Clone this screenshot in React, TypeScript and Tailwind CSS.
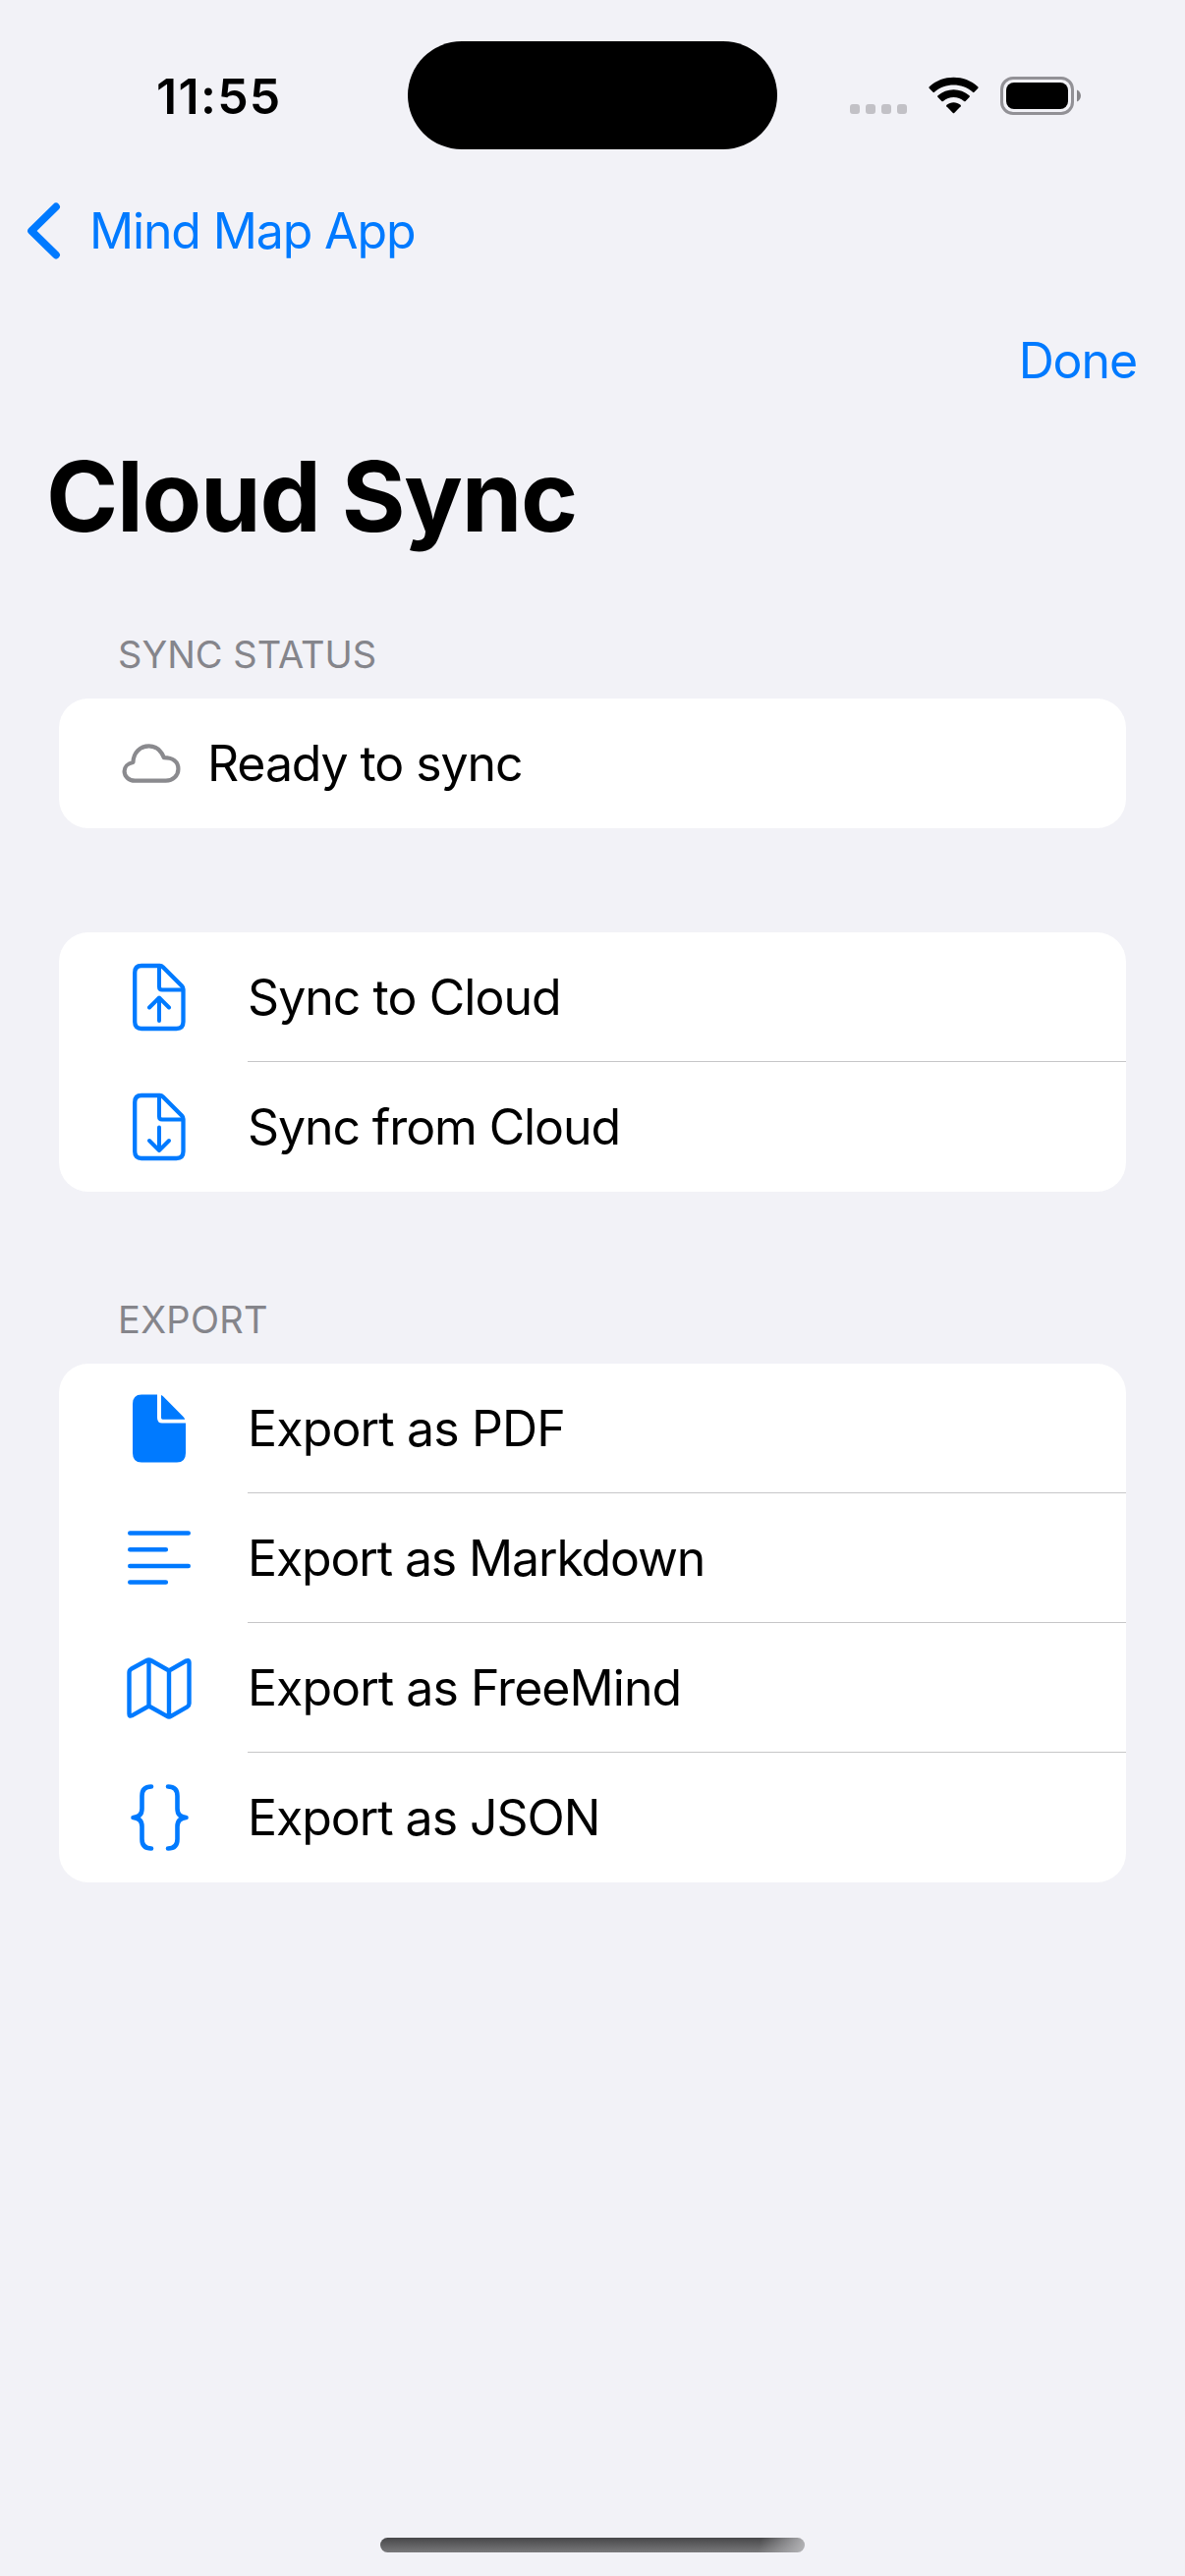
import type { ReactNode } from 'react';

const stroke = {
  fill: 'none',
  stroke: 'currentColor',
  strokeLinecap: 'round' as const,
  strokeLinejoin: 'round' as const,
};

function DocOutline({ children }: { children: ReactNode }) {
  return (
    <svg width="54" height="70" viewBox="0 0 54 70" {...stroke} strokeWidth="4.300">
      <path d="M9 3H27.500Q29.500 3 31 4.500L50 23.500Q51.500 25 51.500 27V60Q51.500 67 44.500 67H9Q2.200 67 2.200 60V10Q2.200 3 9 3Z" />
      <path d="M27 4V24.500Q27 27.500 30 27.500H50" strokeWidth="4" />
      {children}
    </svg>
  );
}

function DocUp() {
  return (
    <DocOutline>
      <path d="M27 59V35.500M17 45.500L27 35.500L37 45.500" strokeWidth="4" />
    </DocOutline>
  );
}

function DocDown() {
  return (
    <DocOutline>
      <path d="M27 35.500V59M17 49L27 59L37 49" strokeWidth="4" />
    </DocOutline>
  );
}

function DocFill() {
  return (
    <svg width="54" height="70" viewBox="0 0 54 70" fill="currentColor">
      <path d="M9 0.500H25V24Q25 29.500 30 29.500H54V60Q54 69.500 45 69.500H9Q0 69.500 0 60V10Q0 0.500 9 0.500Z" />
      <path d="M29 1Q30 1.300 31 2.300L51.500 23Q53 24.500 53.200 25.800H30.500Q29 25.800 29 24Z" />
    </svg>
  );
}

function Lines() {
  return (
    <svg className="mb-px" width="64" height="55" viewBox="0 0 64 55" {...stroke} strokeWidth="4.600">
      <path d="M2.300 2.500H61.700M2.300 19.300H38.800M2.300 36H61.700M2.300 52.500H38.800" />
    </svg>
  );
}

function MapIcon() {
  return (
    <svg width="66" height="63" viewBox="0 0 66 63" {...stroke} strokeWidth="4.400">
      <path d="M2.500 15.500Q2.500 13 4.500 11.800L20.500 3Q22.500 1.800 24.500 3L43 13.500L60.500 3.500Q63.500 2.200 63.500 5V47Q63.500 49 61.500 50.300L45 59.800Q43 61 41 59.800L22.500 49.500L5 59.300Q2.500 60.300 2.500 57.500ZM22.500 3V49.500M43 13.500V60" />
    </svg>
  );
}

function Braces() {
  return (
    <svg className="ml-[2px]" width="60" height="68" viewBox="0 0 60 68" {...stroke} strokeWidth="4.600">
      <path d="M21 2.500C14.500 2.500 11.500 5.500 11.500 12V25C11.500 31 8.500 33.500 2.500 34C8.500 34.500 11.500 37 11.500 43V56C11.500 62.500 14.500 65.500 21 65.500" />
      <path d="M38 2.500C44.500 2.500 47.500 5.500 47.500 12V25C47.500 31 50.500 33.500 56.500 34C50.500 34.500 47.500 37 47.500 43V56C47.500 62.500 44.500 65.500 38 65.500" />
    </svg>
  );
}

interface RowProps {
  icon: ReactNode;
  label: string;
  tracking?: string;
  last?: boolean;
}

function Row({ icon, label, tracking = 'tracking-[-1.050px]', last }: RowProps) {
  return (
    <div className="flex h-[132px] pl-[60px]">
      <div className="flex w-[83px] items-center justify-center text-[#007aff]">{icon}</div>
      <div
        className={
          last
            ? 'ml-[49px] flex flex-1 items-center pt-px'
            : 'ml-[49px] flex flex-1 items-center border-b border-[#c6c6c8] pt-[2px]'
        }
      >
        <span className={`text-[50px] ${tracking}`}>{label}</span>
      </div>
    </div>
  );
}

function StatusBar() {
  return (
    <div className="flex h-[194px] items-start">
      <div className="w-[415px] pl-[159px] pt-[68px]">
        <span className="block text-[50px] font-semibold leading-[60px] tracking-[1.300px]">11:55</span>
      </div>
      <div className="mt-[42px] h-[110px] w-[376px] rounded-[55px] bg-black" />
      <div className="flex pl-[74px] pt-[78px]">
        <div className="mt-[28px] flex gap-[6px]">
          <i className="size-[10px] rounded-[3px] bg-[#c2c1c6]" />
          <i className="size-[10px] rounded-[3px] bg-[#c2c1c6]" />
          <i className="size-[10px] rounded-[3px] bg-[#c2c1c6]" />
          <i className="size-[10px] rounded-[3px] bg-[#c2c1c6]" />
        </div>
        <svg className="ml-[22px]" width="51" height="39" viewBox="0 0 51 39">
          <path d="M0.600 11.800Q0 11 0.800 10.200C14.500 -2.400 36.500 -2.400 50.200 10.200Q51 11 50.400 11.800L46.500 15.800Q45.800 16.500 45 15.800C34 6.200 17 6.200 6 15.800Q5.200 16.500 4.500 15.800Z" />
          <path d="M9.300 20.800Q8.700 20 9.500 19.300C18.500 11.300 32.500 11.300 41.500 19.300Q42.300 20 41.700 20.800L37.600 25Q36.900 25.600 36.100 25C30 19.600 21 19.600 14.900 25Q14.100 25.600 13.400 25Z" />
          <path d="M18.300 30.200Q17.700 29.400 18.500 28.700C22.500 25.300 28.500 25.300 32.500 28.700Q33.300 29.400 32.700 30.200L26.200 37Q25.500 37.700 24.800 37Z" />
        </svg>
        <div className="ml-[22px] flex items-center">
          <div className="h-[39px] w-[75px] rounded-[13px] border-[3px] border-[#929196] p-[3px]">
            <div className="size-full rounded-[8px] bg-black" />
          </div>
          <svg className="ml-[3px]" width="4" height="13" viewBox="0 0 4 13">
            <path d="M0 0.500C5.300 2.500 5.300 10.500 0 12.500Z" fill="#868589" />
          </svg>
        </div>
      </div>
    </div>
  );
}

export default function App() {
  return (
    <div className="flex h-[2622px] w-[1206px] flex-col overflow-hidden bg-[#f2f2f7] font-['Inter',sans-serif] text-black">
      <StatusBar />
      <div className="flex h-[82px] items-center gap-[29px] pl-[27px] text-[#007aff]">
        <svg width="35" height="58" viewBox="0 0 35 58" {...stroke} strokeWidth="7.800">
          <path d="M30 4.500L5 29L30 53.500" />
        </svg>
        <span className="text-[50px] leading-[60px] tracking-[-1.150px]">Mind Map App</span>
      </div>
      <div className="flex h-[182px] items-center justify-end pr-[49px] text-[#007aff]">
        <span className="text-[50px] leading-[60px] tracking-[-1.100px]">Done</span>
      </div>
      <h1 className="ml-[47px] mt-[-13px] h-[121px] text-[99px] font-bold leading-[120px] tracking-[-1.250px]">
        Cloud Sync
      </h1>
      <main className="mx-[60px] mt-[77px]">
        <h2 className="h-[68px] pl-[60px] text-[38px] leading-[46px] text-[#85858b]">SYNC STATUS</h2>
        <section className="flex h-[132px] items-center gap-[27px] rounded-[30px] bg-white pl-[64px]">
          <svg className="text-[#8a8a8e]" width="60" height="40" viewBox="0 0 62 42" {...stroke} strokeWidth="4.400">
            <path d="M13.500 39.500H46.500C54 39.500 59.800 34 59.800 27C59.800 19.500 54 14.800 44.500 14.800C41.500 7.500 36 2.500 28.500 2.500C19 2.500 11.800 9.500 11.500 20C5.500 21 2.200 25 2.200 29.500C2.200 35 7 39.500 13.500 39.500Z" />
          </svg>
          <span className="text-[50px] tracking-[-1.100px]">Ready to sync</span>
        </section>
        <section className="mt-[106px] rounded-[30px] bg-white">
          <Row icon={<DocUp />} label="Sync to Cloud" tracking="tracking-[-0.950px]" />
          <Row icon={<DocDown />} label="Sync from Cloud" tracking="tracking-[-1.100px]" last />
        </section>
        <h2 className="mt-[107px] h-[68px] pl-[60px] text-[38px] leading-[46px] tracking-[0.300px] text-[#85858b]">
          EXPORT
        </h2>
        <section className="rounded-[30px] bg-white">
          <Row icon={<DocFill />} label="Export as PDF" tracking="tracking-[-0.850px]" />
          <Row icon={<Lines />} label="Export as Markdown" tracking="tracking-[-1.150px]" />
          <Row icon={<MapIcon />} label="Export as FreeMind" tracking="tracking-[-0.950px]" />
          <Row icon={<Braces />} label="Export as JSON" last />
        </section>
      </main>
      <div className="mx-auto mb-[24px] mt-auto h-[15px] w-[432px] rounded-full bg-[linear-gradient(105deg,transparent_89%,#b5b5b8_100%),linear-gradient(#474749,#79797b)]" />
    </div>
  );
}
